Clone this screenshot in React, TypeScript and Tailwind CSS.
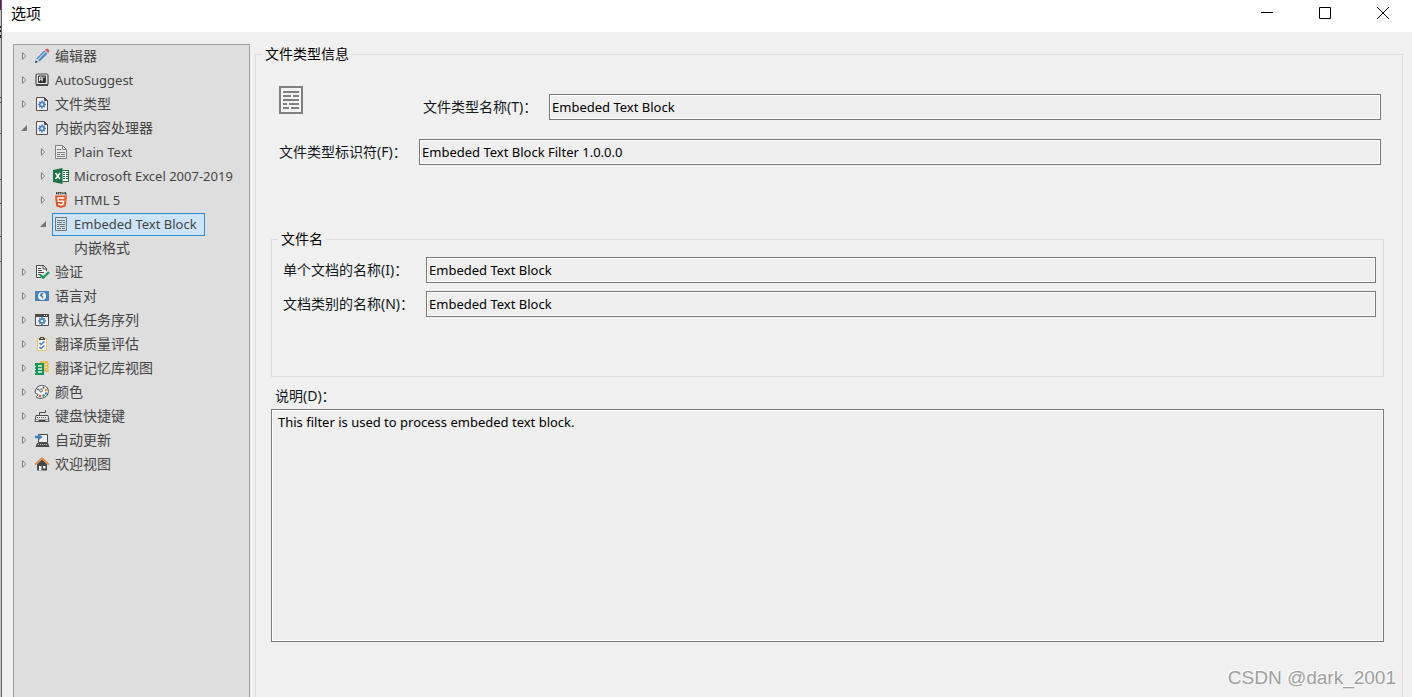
import React, { useState } from "react";

interface INode {
  label: string;
  icon: React.ReactNode;
  level: number;
  open?: boolean;
  leaf?: boolean;
  latin?: boolean;
}

const PencilIcon = () => (
  <svg width="16" height="16" viewBox="0 0 16 16">
    <path d="M1 15l1.400-4.600L10.200 2.600l3.200 3.200L5.600 13.600z" fill="#4a84bf" />
    <path d="M4 11.400L11.200 4.200" stroke="#a9cbe9" strokeWidth="1.400" />
    <path d="M1.900 12.200l.5-1.800 3.200 3.200-1.800.5z" fill="#f2f2f2" />
    <path d="M1 15l.9-2.800 1.900 1.900z" fill="#404040" />
    <path d="M11 1.800l3.200 3.200c1.400-1.200 1.400-2.200.6-3.200-1-1.200-2.400-1.300-3.800 0z" fill="#cf5a50" />
  </svg>
);

const KeyIcon = () => (
  <svg width="16" height="16" viewBox="0 0 16 16">
    <rect x="2" y="2" width="12" height="11" rx="1.500" fill="#e8e8e8" stroke="#4a4a4a" strokeWidth="1.200" />
    <path d="M2 12h12v2H2z" fill="#4a4a4a" />
    <rect x="4" y="3.500" width="8" height="7.500" rx="1" fill="#333" />
    <path d="M5.500 9.200V5h2.600v4.200M5.500 7.200h2.600M10 4.500v1.500" stroke="#fff" fill="none" />
  </svg>
);

const GearShape = ({ x, y }: { x: number; y: number }) => (
  <g transform={`translate(${x} ${y})`}>
    <path
      d="M-.8-4h1.600v8H-.8zM-4-.8h8v1.600h-8zM-3.300-2.300l1-1 5.600 5.600-1 1zM2.300-3.300l1 1-5.600 5.600-1-1z"
      fill="#4584c0"
    />
    <circle r="2.900" fill="#4584c0" />
    <circle r="1.300" fill="#f2f2f2" />
  </g>
);

const GearPageIcon = () => (
  <svg width="16" height="16" viewBox="0 0 16 16">
    <path d="M2.500 1.500h8l3 3v10h-11z" fill="#f2f2f2" stroke="#505050" />
    <path d="M10 1v4h4z" fill="#505050" />
    <GearShape x={8} y={8.5} />
  </svg>
);

const PageIcon = () => (
  <svg width="16" height="16" viewBox="0 0 16 16">
    <path d="M2.500 1.500h7l4 4v9h-11z" fill="#e8e8e8" stroke="#808080" />
    <path d="M9.500 1.500v4h4M4 5.500h4M4 8.500h8M4 10.500h3M8 10.500h4M4 12.500h8" fill="none" stroke="#808080" />
  </svg>
);

const ExcelIcon = () => (
  <svg width="16" height="16" viewBox="0 0 16 16">
    <rect x="8.500" y="2.500" width="7" height="11" fill="#fff" stroke="#1e7145" />
    <path d="M10 4.500h2M13 4.500h2M10 6.500h2M13 6.500h2M10 8.500h2M13 8.500h2M10 10.500h2M13 10.500h2" stroke="#1e7145" />
    <path d="M0 2l9.500-2v16L0 14z" fill="#1e7145" />
    <path d="M2.500 5l4.500 6M7 5l-4.500 6" stroke="#fff" strokeWidth="1.500" />
  </svg>
);

const HtmlIcon = () => (
  <svg width="16" height="16" viewBox="0 0 16 16">
    <path d="M3.500 0v2.400M5.500 0v2.400M3.500 1.200h2M6.200.5h2.200M7.300.5v2M9.200 2.400V.4l1 1 1-1v2M12.500 0v2.100h1.300" stroke="#222" strokeWidth=".8" fill="none" />
    <path d="M2 3.500h12l-1.200 10.700L8 16l-4.800-1.800z" fill="#e44f26" />
    <path d="M8 4.500h5l-1 9L8 15z" fill="#f1662a" />
    <path d="M11.300 6H5l.3 3.300h5.200l-.4 3L8 13l-2.200-.7-.1-1.200" stroke="#fff" strokeWidth="1.500" fill="none" />
  </svg>
);

const BlockIcon = () => (
  <svg width="16" height="16" viewBox="0 0 16 16">
    <path d="M2.500 1.500h11v13h-11z" fill="none" stroke="#757575" />
    <path d="M4 4.500h8M4 6.500h5M10 6.500h2M4 8.500h8M4 10.500h2M7 10.500h5M4 12.500h4M9 12.500h3" stroke="#757575" />
  </svg>
);

const LargeBlockIcon = () => (
  <svg width="24" height="28" viewBox="0 0 24 28">
    <path d="M1 1h22v26H1z" fill="#f3f3f3" stroke="#808080" strokeWidth="2" />
    <path d="M4 6h16M4 10h8M14 10h6M4 14h16M4 18h4M10 18h10M4 22h6M12 22h8" stroke="#808080" strokeWidth="2" />
  </svg>
);

const VerifyIcon = () => (
  <svg width="16" height="16" viewBox="0 0 16 16">
    <path d="M12.500 7V4.500l-3-3h-7v12H7" fill="#f2f2f2" stroke="#484848" />
    <path d="M9 1v4h4M4 4.500h3M4 6.500h4M4 8.500h6M4 10.500h2" fill="none" stroke="#484848" />
    <path d="M6 10.500l3.200 3.200L15 8" fill="none" stroke="#159a5a" strokeWidth="2.200" />
  </svg>
);

const LanguageIcon = () => (
  <svg width="16" height="16" viewBox="0 0 16 16">
    <path d="M1 3h14v10H1z" fill="#4682be" />
    <circle cx="8" cy="8" r="4" fill="#f3f3f3" />
    <path d="M7 5l2-.5.5 1.500-1.500 1 1.500 2-1 2-1-2-1.800-1.500z" fill="#4682be" />
  </svg>
);

const TaskIcon = () => (
  <svg width="16" height="16" viewBox="0 0 16 16">
    <path d="M1.500 2.500h13v11h-13z" fill="#f2f2f2" stroke="#4b4b4b" />
    <path d="M1 2h14v3H1z" fill="#4b4b4b" />
    <path d="M10 3.500h1M12 3.500h1" stroke="#ddd" />
    <GearShape x={8} y={9} />
  </svg>
);

const QualityIcon = () => (
  <svg width="16" height="16" viewBox="0 0 16 16">
    <path d="M3.500 2.500h9v12h-9z" fill="#f4f4f4" stroke="#edc267" />
    <path d="M5 4V2.500L6.500 1h3L11 2.500V4z" fill="#444" />
    <path d="M7 2.500h2" stroke="#ddd" />
    <path d="M5.500 7l1.500 1.500L10.500 5.500M5.500 11l1.500 1.500 3.500-3" fill="none" stroke="#4682be" strokeWidth="1.500" />
  </svg>
);

const MemoryIcon = () => (
  <svg width="16" height="16" viewBox="0 0 16 16">
    <path d="M6 1h8v2h1v2h-1v1h1v2h-1v1h1v3H6z" fill="#efbd5c" />
    <path d="M11 4.500h2M11 7.500h2" stroke="#f7e5bf" />
    <path d="M1 3h9v12H1v-2h1v-1H1v-2h1V9H1V7h1V6H1z" fill="#16965b" />
    <path d="M4 6h4M4 9h4M4 12h4" stroke="#e8f5ee" strokeWidth="1.500" />
  </svg>
);

const PaletteIcon = () => (
  <svg width="16" height="16" viewBox="0 0 16 16">
    <path d="M3 3.500C5 1 10 .8 12.500 3c2.500 2.300 2.300 6.500 0 9-2 2.200-6 2.800-9 2-1.500-.5-1.500-1.500-.5-2.200 1.500-1 1.500-2-.2-1.900C.5 10 .8 6 3 3.500z" fill="#f4f4f4" stroke="#505050" />
    <circle cx="7" cy="6.500" r="1.500" fill="#ddd" stroke="#505050" strokeWidth=".8" />
    <circle cx="9.500" cy="3.700" r="1" fill="#505050" />
    <circle cx="12" cy="6" r="1.200" fill="#e48a35" />
    <circle cx="12" cy="9.500" r="1.200" fill="#4682be" />
    <circle cx="9.500" cy="11.500" r="1.200" fill="#16965b" />
    <circle cx="6" cy="12" r="1.200" fill="#d9534a" />
    <circle cx="4" cy="5.500" r=".9" fill="#505050" />
  </svg>
);

const KeyboardIcon = () => (
  <svg width="16" height="16" viewBox="0 0 16 16">
    <path d="M5.500 7V4.500h6V2" fill="none" stroke="#4b4b4b" />
    <path d="M2 7.500h12l1 6H1z" fill="#f0f0f0" stroke="#4b4b4b" />
    <path d="M3 9.500h10M2.500 11.500h11" stroke="#4b4b4b" strokeDasharray="1 1" />
    <path d="M4.500 12.500h7" stroke="#4b4b4b" />
  </svg>
);

const UpdateIcon = () => (
  <svg width="16" height="16" viewBox="0 0 16 16">
    <path d="M4.500 2.500h9v8h-9z" fill="#f2f2f2" stroke="#4b4b4b" />
    <path d="M1 3.800h3.500V1.500L8.500 5l-4 3.500V6.200H1z" fill="#4682be" />
    <path d="M3 11h11l1.500 4H1.500z" fill="#4b4b4b" />
    <path d="M4 12.500h9" stroke="#d0d0d0" strokeDasharray="1 1" />
  </svg>
);

const HomeIcon = () => (
  <svg width="16" height="16" viewBox="0 0 16 16">
    <path d="M3 8l5-4.500L13 8v6.500H3z" fill="#474747" />
    <path d="M5 10h2.500v4.500H5zM9 10h2.500v2.500H9z" fill="#f2f2f2" />
    <path d="M1 8.700l7-6.500 7 6.500" fill="none" stroke="#e58a42" strokeWidth="1.800" />
  </svg>
);

const nodes: INode[] = [
  { label: "编辑器", icon: <PencilIcon />, level: 0 },
  { label: "AutoSuggest", icon: <KeyIcon />, level: 0, latin: true },
  { label: "文件类型", icon: <GearPageIcon />, level: 0 },
  { label: "内嵌内容处理器", icon: <GearPageIcon />, level: 0, open: true },
  { label: "Plain Text", icon: <PageIcon />, level: 1, latin: true },
  { label: "Microsoft Excel 2007-2019", icon: <ExcelIcon />, level: 1, latin: true },
  { label: "HTML 5", icon: <HtmlIcon />, level: 1, latin: true },
  { label: "Embeded Text Block", icon: <BlockIcon />, level: 1, open: true, latin: true },
  { label: "内嵌格式", icon: null, level: 1, leaf: true },
  { label: "验证", icon: <VerifyIcon />, level: 0 },
  { label: "语言对", icon: <LanguageIcon />, level: 0 },
  { label: "默认任务序列", icon: <TaskIcon />, level: 0 },
  { label: "翻译质量评估", icon: <QualityIcon />, level: 0 },
  { label: "翻译记忆库视图", icon: <MemoryIcon />, level: 0 },
  { label: "颜色", icon: <PaletteIcon />, level: 0 },
  { label: "键盘快捷键", icon: <KeyboardIcon />, level: 0 },
  { label: "自动更新", icon: <UpdateIcon />, level: 0 },
  { label: "欢迎视图", icon: <HomeIcon />, level: 0 },
];

const Arrow = ({ open, leaf }: { open?: boolean; leaf?: boolean }) => (
  <svg width="8" height="8" viewBox="0 0 8 8" className="shrink-0">
    {!leaf && open && <path d="M7 1v6H1z" fill="#757575" />}
    {!leaf && !open && <path d="M2.500.800v6.400L5.800 4z" fill="#eee" stroke="#757575" />}
  </svg>
);

const TreeRow: React.FC<{ node: INode; selected: boolean; onSelect: () => void }> = (props) => {
  const { node, selected, onSelect } = props;
  return (
    <li className={node.level ? "flex h-6 items-center pl-[25px]" : "flex h-6 items-center pl-1.5"}>
      <Arrow open={node.open} leaf={node.leaf} />
      <button
        onClick={onSelect}
        className={
          selected
            ? "ml-[5px] flex h-[23px] items-center gap-[5px] border border-[#2a8dd4] bg-[#cce4f7] pr-[7px] whitespace-nowrap"
            : "ml-[5px] flex h-[23px] items-center gap-[5px] border border-transparent pr-[7px] whitespace-nowrap"
        }
      >
        <span className="h-4 w-4 shrink-0">{node.icon}</span>
        <span className={node.latin ? "text-[13px]" : "text-sm"}>{node.label}</span>
      </button>
    </li>
  );
};

// sliver of the window lying behind the dialog
const BackWindowEdge = () => (
  <div className="w-[2px] shrink-0 overflow-hidden border-r border-[#606060] bg-[#c4c4c4]">
    <svg width="1" height="270" viewBox="0 0 1 270">
      <path d="M0 0h1v10H0z" fill="#5c1a6b" />
      <path d="M0 26h1v2H0zM0 30h1v2H0zM0 35h1v3H0z" fill="#202020" />
      <path d="M0 97h1v1H0zM0 102h1v1H0zM0 133h1v1H0zM0 179h1v1H0zM0 203h1v1H0zM0 236h1v1H0zM0 261h1v1H0z" fill="#505050" />
    </svg>
  </div>
);

const fieldClass =
  "h-[26px] min-w-0 flex-1 border border-[#7a7a7a] bg-[#efefef] px-0.5 text-[13px] text-black shadow-[inset_0_0_0_1px_#fff] outline-none";

const Field: React.FC<{ id: string; label: string; value: string; labelClass: string }> = (props) => {
  const { id, label, value, labelClass } = props;
  return (
    <div className="flex items-center">
      <label htmlFor={id} className={labelClass}>
        {label}
      </label>
      <input id={id} readOnly value={value} className={fieldClass} />
    </div>
  );
};

export default function App() {
  const [selected, setSelected] = useState(7);

  return (
    <div className="relative flex h-screen overflow-hidden bg-[#f0f0f0] font-['Noto_Sans','Noto_Sans_CJK_SC',sans-serif] text-sm leading-5 text-[#101820]">
      <BackWindowEdge />
      <div className="flex min-w-0 flex-1 flex-col">
        <header className="flex h-8 shrink-0 items-center justify-between bg-white pb-1.5 pl-[9px] text-[15px] text-black">
          <h1>选项</h1>
          <div className="flex">
            <button aria-label="最小化" className="flex h-6 w-[58px] items-center justify-center">
              <svg width="12" height="12" viewBox="0 0 12 12">
                <path d="M0 5.500h12" stroke="#000" />
              </svg>
            </button>
            <button aria-label="最大化" className="flex h-6 w-[58px] items-center justify-center">
              <svg width="12" height="12" viewBox="0 0 12 12">
                <path d="M.5.500h11v11H.5z" fill="none" stroke="#000" />
              </svg>
            </button>
            <button aria-label="关闭" className="flex h-6 w-[58px] items-center justify-center">
              <svg width="12" height="12" viewBox="0 0 12 12">
                <path d="M0 0l12 12M12 0L0 12" stroke="#000" />
              </svg>
            </button>
          </div>
        </header>

        <main className="flex min-h-0 flex-1 gap-[5px] pt-3 pr-[9px] pl-[11px]">
          <nav className="w-[237px] shrink-0 border border-b-0 border-[#a0a0a0] bg-[#dedede] text-[#454545]">
            <ul className="-mt-px">
              {nodes.map((node, i) => (
                <TreeRow key={node.label} node={node} selected={i === selected} onSelect={() => setSelected(i)} />
              ))}
            </ul>
          </nav>

          <fieldset className="-mb-6 min-w-0 flex-1 border border-[#dcdcdc] pr-[18px] pl-[15px]">
            <legend className="-ml-2 px-0.5 text-black">文件类型信息</legend>
            <div className="flex items-start pt-[22px] pr-[3px] pl-2">
              <LargeBlockIcon />
              <div className="mt-2 ml-[120px] flex-1">
                <Field id="type-name" label="文件类型名称(T)：" value="Embeded Text Block" labelClass="w-[126px] shrink-0" />
              </div>
            </div>
            <div className="mt-[19px] pr-[3px] pl-2">
              <Field id="type-id" label="文件类型标识符(F)：" value="Embeded Text Block Filter 1.0.0.0" labelClass="w-[140px] shrink-0" />
            </div>

            <fieldset className="mt-16 h-[148px] border border-[#dcdcdc] pr-[7px] pl-[11px]">
              <legend className="-ml-[5px] px-[3px] text-black">文件名</legend>
              <div className="flex flex-col gap-2 pt-2">
                <Field id="doc-name" label="单个文档的名称(I)：" value="Embeded Text Block" labelClass="w-[143px] shrink-0" />
                <Field id="doc-class" label="文档类别的名称(N)：" value="Embeded Text Block" labelClass="w-[143px] shrink-0" />
              </div>
            </fieldset>

            <label htmlFor="description" className="mt-[9px] mb-[3px] block pl-1">
              说明(D)：
            </label>
            <textarea
              id="description"
              readOnly
              value="This filter is used to process embeded text block."
              className="block h-[233px] w-full resize-none border border-[#7a7a7a] bg-[#efefef] px-1.5 py-0.5 text-[13px] leading-5 text-black shadow-[inset_0_0_0_1px_#fff] outline-none"
            />
          </fieldset>
        </main>
      </div>
      <div className="absolute right-4 bottom-[7px] font-['Liberation_Sans',sans-serif] text-[19px] leading-6 text-[#a0a0a0] [text-shadow:-1px_-1px_0_#fff]">
        CSDN @dark_2001
      </div>
    </div>
  );
}
